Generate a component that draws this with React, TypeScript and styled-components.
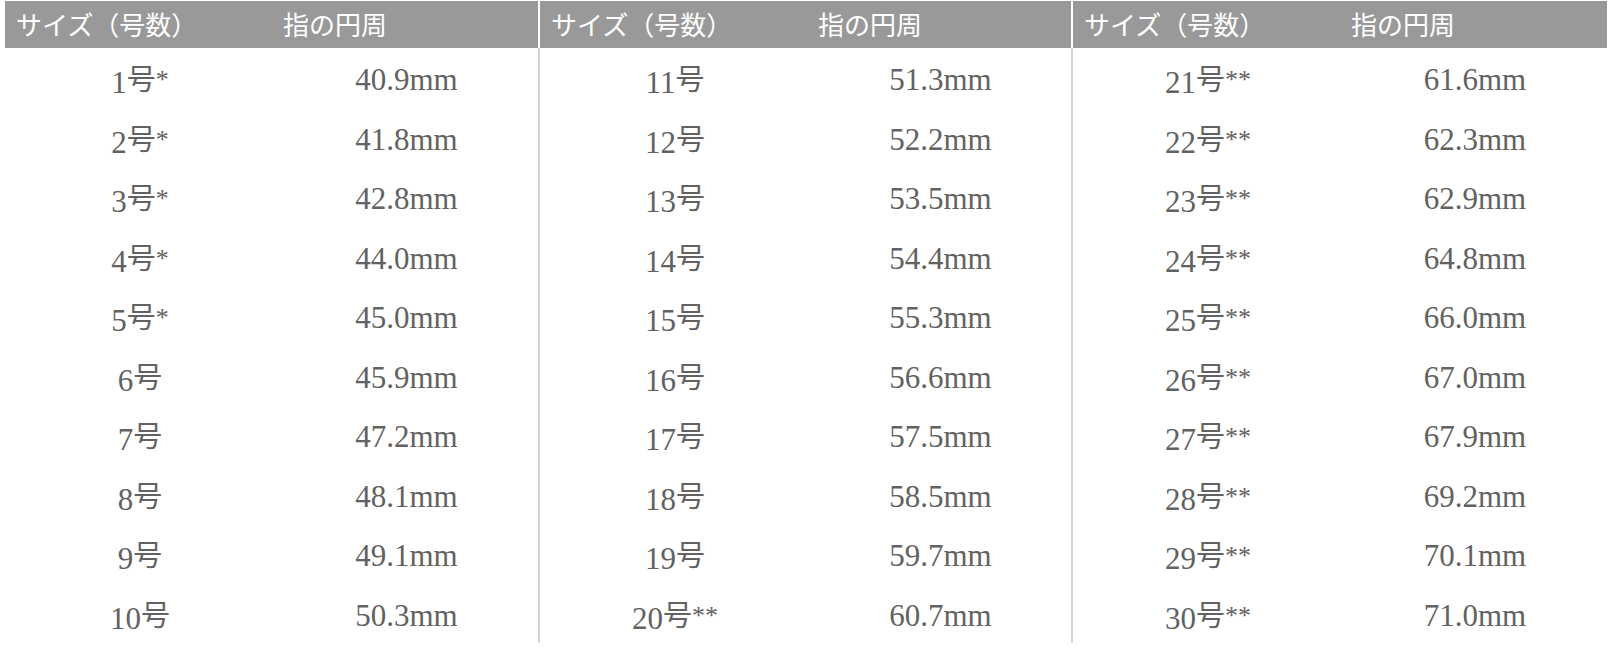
import styled, { createGlobalStyle } from "styled-components";

const GlobalStyle = createGlobalStyle`
  html, body {
    margin: 0;
    padding: 0;
    background: #ffffff;
  }
  body {
    font-family: "Liberation Serif", "Noto Sans CJK JP", serif;
  }
`;

const HEADER_BG = "#999999";
const DIVIDER = "#d6d6d6";
const TEXT = "#626262";

const Page = styled.div`
  display: grid;
  grid-template-columns: 533px 533px 536px;
  padding: 1px 0 0 5px;
`;

const Column = styled.div<{ $divided: boolean }>`
  display: flex;
  flex-direction: column;
  padding-left: ${(p) => (p.$divided ? "2px" : "0")};
`;

const HeaderRow = styled.div`
  display: grid;
  grid-template-columns: 270px 1fr;
  align-items: center;
  height: 47px;
  background: ${HEADER_BG};
  color: #ffffff;
  font-family: "Noto Sans CJK JP", sans-serif;
  font-size: 26px;
`;

const HeaderCell = styled.div<{ $first?: boolean }>`
  padding-left: ${(p) => (p.$first ? "11px" : "8px")};
  padding-bottom: 2px;
  white-space: nowrap;
`;

const Body = styled.div<{ $divided: boolean }>`
  display: flex;
  flex-direction: column;
  margin-left: ${(p) => (p.$divided ? "-2px" : "0")};
  border-left: ${(p) => (p.$divided ? `2px solid ${DIVIDER}` : "none")};
`;

const Row = styled.div`
  display: grid;
  grid-template-columns: 270px 1fr;
  align-items: center;
  height: 59.5px;
  color: ${TEXT};
  font-size: 31px;
`;

const Cell = styled.div`
  text-align: center;
  white-space: nowrap;
  padding-top: 5px;
`;

const Size = styled.span`
  font-family: "Noto Sans CJK JP", sans-serif;
  font-size: 29px;
  position: relative;
  top: -3px;
`;

const Mark = styled.span`
  font-family: "Liberation Serif", serif;
  font-size: 26px;
  position: relative;
  top: -5px;
`;

const circumferences = [
  40.9, 41.8, 42.8, 44.0, 45.0, 45.9, 47.2, 48.1, 49.1, 50.3,
  51.3, 52.2, 53.5, 54.4, 55.3, 56.6, 57.5, 58.5, 59.7, 60.7,
  61.6, 62.3, 62.9, 64.8, 66.0, 67.0, 67.9, 69.2, 70.1, 71.0,
];

const markFor = (n: number) => (n <= 5 ? "*" : n >= 20 ? "**" : "");

export default function App() {
  return (
    <>
      <GlobalStyle />
      <Page>
        {[0, 1, 2].map((col) => (
          <Column key={col} $divided={col > 0}>
            <HeaderRow>
              <HeaderCell $first>サイズ（号数）</HeaderCell>
              <HeaderCell>指の円周</HeaderCell>
            </HeaderRow>
            <Body $divided={col > 0}>
              {Array.from({ length: 10 }, (_, i) => {
                const n = col * 10 + i + 1;
                return (
                  <Row key={n}>
                    <Cell>
                      {n}
                      <Size>号</Size>
                      {markFor(n) && <Mark>{markFor(n)}</Mark>}
                    </Cell>
                    <Cell>{circumferences[n - 1].toFixed(1)}mm</Cell>
                  </Row>
                );
              })}
            </Body>
          </Column>
        ))}
      </Page>
    </>
  );
}
